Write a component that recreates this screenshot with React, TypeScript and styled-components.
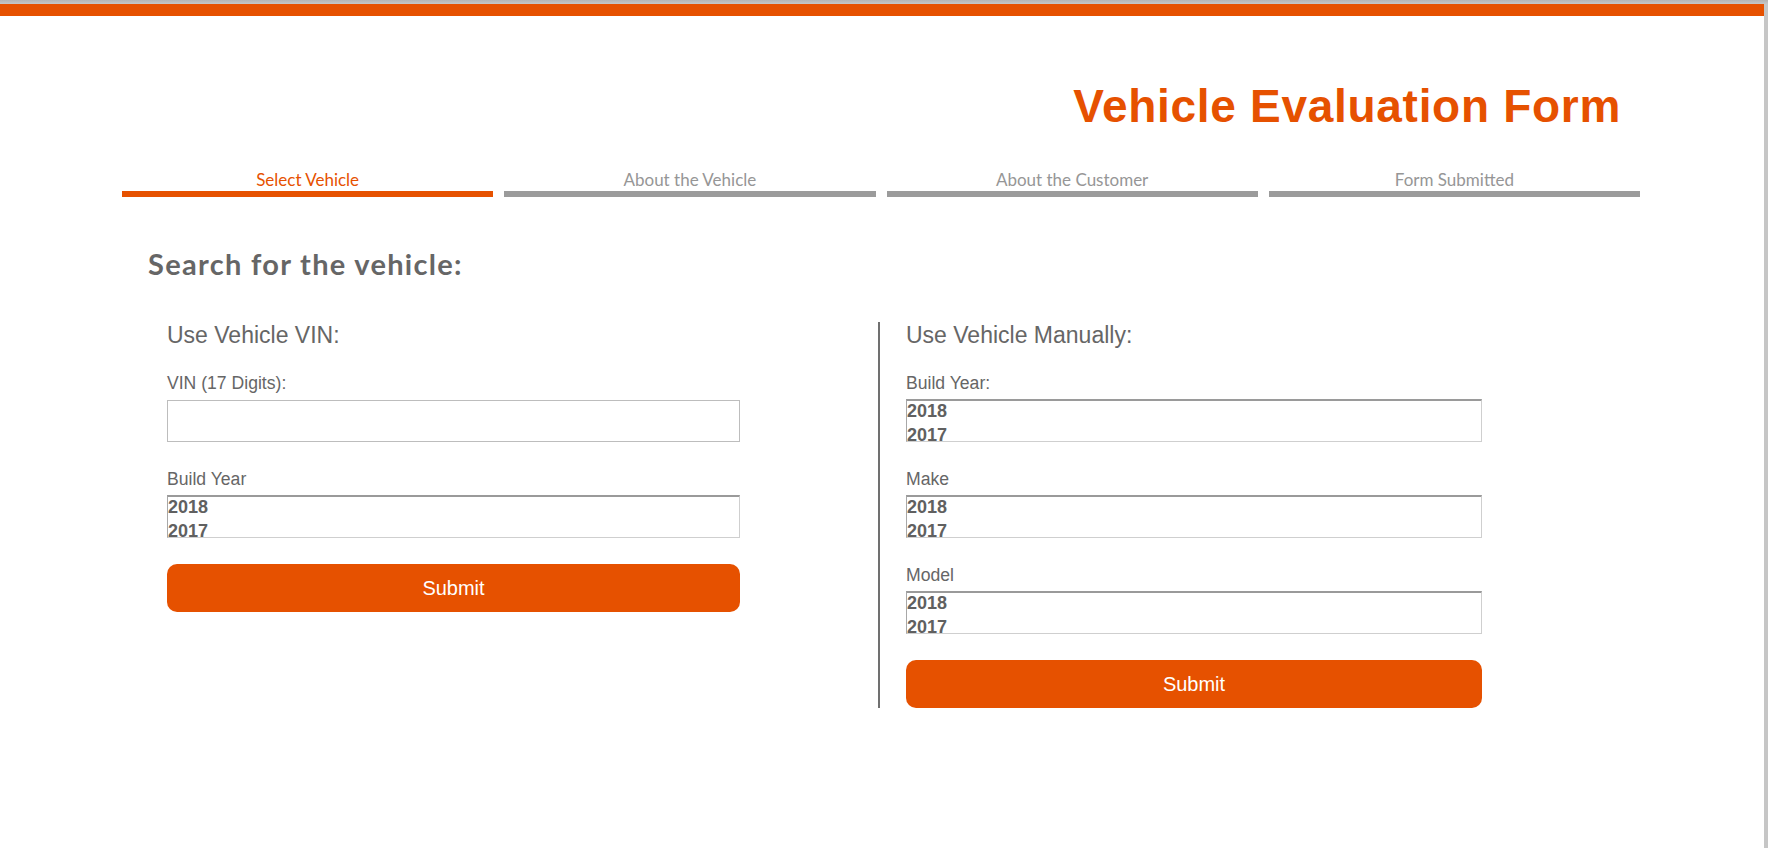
import React from "react";
import styled, { createGlobalStyle } from "styled-components";

const ORANGE = "#e65100";

const GlobalStyle = createGlobalStyle`
  html, body { margin: 0; padding: 0; }
  body {
    background: linear-gradient(180deg, #b4b4b4 0px, #c6c6c6 4px, #c6c6c6 100%);
    font-family: "Liberation Sans", Arial, sans-serif;
  }
  * { box-sizing: border-box; }
`;

const Frame = styled.div`
  margin: 4px 4px 0 0;
  background: #fff;
  min-height: 844px;
`;

const TopBar = styled.div`
  height: 12px;
  background: ${ORANGE};
`;

const Header = styled.header`
  display: flex;
  justify-content: flex-end;
  padding: 67px 143px 0 0;
`;

const Title = styled.h1`
  margin: 0;
  font: bold 46px/46px "Liberation Sans", Arial, sans-serif;
  letter-spacing: 0.7px;
  color: ${ORANGE};
`;

const Steps = styled.nav`
  display: grid;
  grid-template-columns: repeat(4, 1fr);
  column-gap: 11px;
  margin: 41px 124px 0 122px;
`;

const Step = styled.div`
  display: flex;
  flex-direction: column;
  align-items: center;
`;

const StepLabel = styled.span<{ $active?: boolean }>`
  font: 17px/20px Lato, "Open Sans", sans-serif;
  color: ${(p) => (p.$active ? ORANGE : "#969696")};
  margin-bottom: 1px;
`;

const StepBar = styled.div<{ $active?: boolean }>`
  align-self: stretch;
  height: 6px;
  background: ${(p) => (p.$active ? ORANGE : "#9b9b9b")};
`;

const Main = styled.main`
  padding-left: 148px;
`;

const Heading = styled.h2`
  margin: 51px 0 0;
  font: bold 29px/32px Lato, "Open Sans", sans-serif;
  letter-spacing: 1.3px;
  color: #666;
`;

const Columns = styled.div`
  display: flex;
  margin-top: 42px;
`;

const Column = styled.section<{ $divided?: boolean }>`
  display: flex;
  flex-direction: column;
  width: ${(p) => (p.$divided ? "604px" : "730px")};
  padding-left: ${(p) => (p.$divided ? "26px" : "19px")};
  padding-right: ${(p) => (p.$divided ? "0" : "138px")};
  border-left: ${(p) => (p.$divided ? "2px solid #707070" : "none")};
`;

const ColumnTitle = styled.h3`
  margin: 0 0 25px;
  font: 23px/26px "Liberation Sans", Arial, sans-serif;
  color: #666;
`;

const Field = styled.div`
  display: flex;
  flex-direction: column;
  & + & {
    margin-top: 27px;
  }
`;

const FieldLabel = styled.label`
  font: 17.6px/20px "Liberation Sans", Arial, sans-serif;
  color: #666;
  margin-bottom: 6px;
`;

const TextInput = styled.input`
  height: 42px;
  width: 100%;
  margin-top: 1px;
  border: 1px solid #bdbdbd;
  background: #fff;
  padding: 0 8px;
  font: 17px "Liberation Sans", Arial, sans-serif;
  outline: none;
`;

const ListBox = styled.div`
  height: 43px;
  width: 100%;
  overflow: hidden;
  border: 1px solid #cfcfcf;
  border-top: 2px solid #9a9a9a;
  border-left-color: #a8a8a8;
  background: #fff;
`;

const ListOption = styled.div`
  padding: 0;
  font: bold 18px/24px "Liberation Sans", Arial, sans-serif;
  color: #606060;
  &:first-child {
    margin-top: -2px;
  }
`;

const SubmitButton = styled.button`
  height: 48px;
  width: 100%;
  margin-top: 26px;
  border: none;
  border-radius: 10px;
  background: ${ORANGE};
  color: #fff;
  font: 20px "Liberation Sans", Arial, sans-serif;
  cursor: pointer;
`;

const steps = ["Select Vehicle", "About the Vehicle", "About the Customer", "Form Submitted"];
const years = ["2018", "2017"];

function YearList({ label }: { label: string }) {
  return (
    <ListBox role="listbox" aria-label={label}>
      {years.map((y) => (
        <ListOption key={y} role="option">
          {y}
        </ListOption>
      ))}
    </ListBox>
  );
}

export default function App() {
  return (
    <>
      <GlobalStyle />
      <Frame>
        <TopBar />
        <Header>
          <Title>Vehicle Evaluation Form</Title>
        </Header>
        <Steps>
          {steps.map((s, i) => (
            <Step key={s}>
              <StepLabel $active={i === 0}>{s}</StepLabel>
              <StepBar $active={i === 0} />
            </Step>
          ))}
        </Steps>
        <Main>
          <Heading>Search for the vehicle:</Heading>
          <Columns>
            <Column>
              <ColumnTitle>Use Vehicle VIN:</ColumnTitle>
              <Field>
                <FieldLabel>VIN (17 Digits):</FieldLabel>
                <TextInput type="text" />
              </Field>
              <Field>
                <FieldLabel>Build Year</FieldLabel>
                <YearList label="Build Year" />
              </Field>
              <SubmitButton>Submit</SubmitButton>
            </Column>
            <Column $divided>
              <ColumnTitle>Use Vehicle Manually:</ColumnTitle>
              <Field>
                <FieldLabel>Build Year:</FieldLabel>
                <YearList label="Build Year" />
              </Field>
              <Field>
                <FieldLabel>Make</FieldLabel>
                <YearList label="Make" />
              </Field>
              <Field>
                <FieldLabel>Model</FieldLabel>
                <YearList label="Model" />
              </Field>
              <SubmitButton>Submit</SubmitButton>
            </Column>
          </Columns>
        </Main>
      </Frame>
    </>
  );
}
